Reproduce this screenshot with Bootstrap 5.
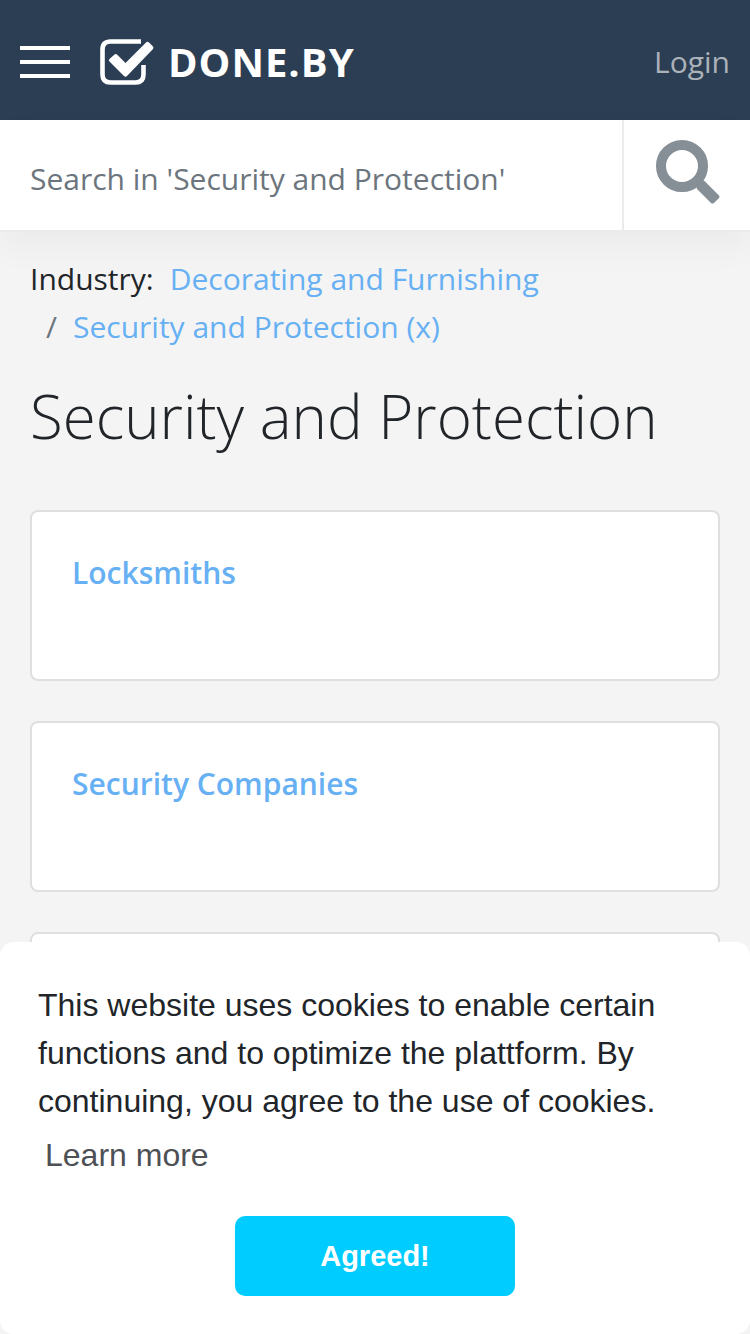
<!DOCTYPE html>
<html lang="en">
<head>
<meta charset="utf-8">
<meta name="viewport" content="width=device-width, initial-scale=1">
<title>Security and Protection - DONE.BY</title>
<link href="https://cdn.jsdelivr.net/npm/bootstrap@5.3.0/dist/css/bootstrap.min.css" rel="stylesheet">
<style>
  body { font-family: "Open Sans", "Noto Sans", sans-serif; font-size: 30px; line-height: 48px; color: #212529; background: #f4f4f4; }
  a { color: #66b0f3; text-decoration: none; }
  .topbar { background: #2c3e53; height: 120px; padding: 3px 20px 0; }
  .menu-toggle { width: 50px; height: 32px; border-top: 4px solid #fff; border-bottom: 4px solid #fff; }
  .menu-toggle span { height: 4px; background: #fff; }
  .brand { color: #fff; font-weight: 700; font-size: 40px; letter-spacing: 1px; margin-left: 30px; gap: 14px; }
  .login { color: #abb2ba; }
  .searchbar { height: 112px; background: #fff; border-bottom: 2px solid #ebebeb; box-shadow: 0 16px 32px rgba(0,0,0,.04); }
  .searchbar input { border: 0; padding: 8px 30px 0; font-size: 30px; min-width: 0; outline: 0; }
  .searchbar input::placeholder { color: #6c757d; opacity: 1; }
  .searchbar button { width: 128px; border: 0; border-left: 2px solid #ebebeb; background: #fff; padding: 0 0 6px 2px; }
  .page { padding: 23px 30px; }
  .crumbs { --bs-breadcrumb-item-padding-x: 16px; font-size: 30px; margin-bottom: 27px; }
  h1 { font-size: 60px; font-weight: 300; line-height: 76px; margin: 0 0 56px; }
  .cards { gap: 40px; }
  .tile { height: 171px; border: 2px solid #dfdfdf; border-radius: 8px; padding: 37px 40px; }
  .tile a { font-weight: 600; }
  .cookies { background: #fff; border-radius: 14px; padding: 39px 38px 38px; font-family: "Liberation Sans", Arial, sans-serif; font-size: 32px; }
  .cookies .more { color: #4d5054; padding: 6px 7px 0; }
  .cookies button { width: 280px; height: 80px; border: 0; border-radius: 10px; background: #0cf; color: #fff; font-weight: 700; font-size: 29px; margin-top: 37px; }
</style>
</head>
<body>
<header class="topbar d-flex align-items-center">
  <button class="menu-toggle btn rounded-0 p-0 border-start-0 border-end-0 d-flex flex-column justify-content-center" aria-label="Menu"><span class="w-100"></span></button>
  <a class="brand d-flex align-items-center" href="#">
    <svg width="54" height="46" viewBox="0 0 54 46" aria-hidden="true">
      <path d="M41 2.500H10.500Q2.500 2.500 2.500 10.500V35.500Q2.500 43.500 10.500 43.500H35.500Q43.500 43.500 43.500 35.500V26" fill="none" stroke="#fff" stroke-width="4.600"/>
      <path d="M9.500 20 14.500 15.500Q16 14.500 17.500 16L25.500 24 46 3.500Q47.500 2 49 3.500L53 7.500Q54 8.500 53 10L27 37Q25.500 38.500 24 37L9.500 22.500Q8 21 9.500 20Z" fill="#fff"/>
    </svg>
    <span>DONE.BY</span>
  </a>
  <a class="login ms-auto" href="#">Login</a>
</header>
<form class="searchbar d-flex" role="search">
  <input class="flex-grow-1" type="search" aria-label="Search" placeholder="Search in 'Security and Protection'">
  <button type="submit" aria-label="Search">
    <svg width="66" height="66" viewBox="0 0 66 66" aria-hidden="true">
      <circle cx="27" cy="27" r="21" fill="none" stroke="#868e96" stroke-width="10"/>
      <path d="M47 42Q48.500 41 50 42.500L64 56.500Q65 58 64 59L59 64Q57.500 65 56 64L42 50Q41.500 49 42 47Z" fill="#868e96"/>
    </svg>
  </button>
</form>
<main class="page">
  <nav aria-label="breadcrumb">
    <ol class="breadcrumb crumbs">
      <li class="me-3">Industry:</li>
      <li><a href="#">Decorating and Furnishing</a></li>
      <li class="w-100 d-flex"><span class="text-secondary px-3" aria-hidden="true">/</span><a href="#">Security and Protection (x)</a></li>
    </ol>
  </nav>
  <h1>Security and Protection</h1>
  <div class="cards d-flex flex-column">
    <section class="tile bg-white"><a href="#">Locksmiths</a></section>
    <section class="tile bg-white"><a href="#">Security Companies</a></section>
    <section class="tile bg-white"></section>
  </div>
</main>
<aside class="cookies fixed-bottom" aria-label="Cookie notice">
  <div>This website uses cookies to enable certain functions and to optimize the plattform. By continuing, you agree to the use of cookies.</div>
  <a class="more d-inline-block" href="#">Learn more</a>
  <div class="text-center"><button type="button">Agreed!</button></div>
</aside>
<script src="https://cdn.jsdelivr.net/npm/bootstrap@5.3.0/dist/js/bootstrap.bundle.min.js"></script>
</body>
</html>
